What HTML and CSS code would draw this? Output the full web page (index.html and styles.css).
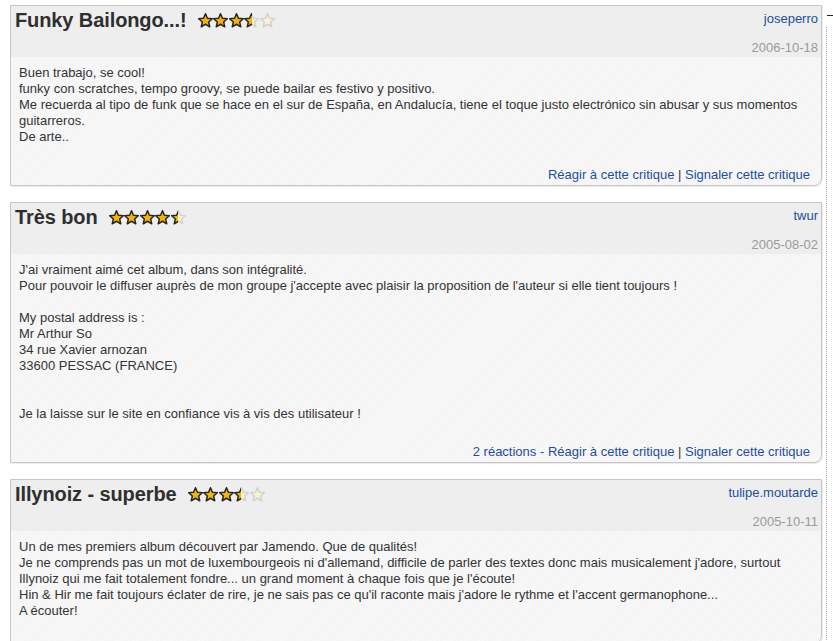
FILE: index.html
```html
<!DOCTYPE html>
<html lang="fr">
<head>
<meta charset="utf-8">
<title>Critiques</title>
<link rel="stylesheet" href="styles.css">
</head>
<body>
<div class="page">
  <div class="reviews">

    <div class="review">
      <div class="review-head">
        <div class="head-row">
          <h2 class="title">Funky Bailongo...!</h2>
          <span class="stars">
            <svg class="star" viewBox="0 0 20 20"><polygon class="full" points="10,1 12.59,7.04 19.13,7.63 14.18,11.96 15.64,18.37 10,15 4.36,18.37 5.82,11.96 0.87,7.63 7.41,7.04"/></svg>
            <svg class="star" viewBox="0 0 20 20"><polygon class="full" points="10,1 12.59,7.04 19.13,7.63 14.18,11.96 15.64,18.37 10,15 4.36,18.37 5.82,11.96 0.87,7.63 7.41,7.04"/></svg>
            <svg class="star" viewBox="0 0 20 20"><polygon class="full" points="10,1 12.59,7.04 19.13,7.63 14.18,11.96 15.64,18.37 10,15 4.36,18.37 5.82,11.96 0.87,7.63 7.41,7.04"/></svg>
            <svg class="star" viewBox="0 0 20 20"><defs><linearGradient id="hf1" x1="0" x2="1" y1="0" y2="0"><stop offset="0.5" stop-color="#f6b400"/><stop offset="0.5" stop-color="#fbf2cf"/></linearGradient><linearGradient id="hs1" x1="0" x2="1" y1="0" y2="0"><stop offset="0.5" stop-color="#262626"/><stop offset="0.5" stop-color="#d2d2d2"/></linearGradient></defs><polygon fill="url(#hf1)" stroke="url(#hs1)" stroke-width="2" stroke-linejoin="round" points="10,1 12.59,7.04 19.13,7.63 14.18,11.96 15.64,18.37 10,15 4.36,18.37 5.82,11.96 0.87,7.63 7.41,7.04"/></svg>
            <svg class="star" viewBox="0 0 20 20"><polygon class="empty" points="10,1 12.59,7.04 19.13,7.63 14.18,11.96 15.64,18.37 10,15 4.36,18.37 5.82,11.96 0.87,7.63 7.41,7.04"/></svg>
          </span>
          <a class="user" href="#">joseperro</a>
        </div>
        <div class="date">2006-10-18</div>
      </div>
      <div class="review-body">
        <p class="text">Buen trabajo, se cool!<br>funky con scratches, tempo groovy, se puede bailar es festivo y positivo.<br>Me recuerda al tipo de funk que se hace en el sur de España, en Andalucía, tiene el toque justo electrónico sin abusar y sus momentos guitarreros.<br>De arte..</p>
        <div class="actions"><a href="#">Réagir à cette critique</a> | <a href="#">Signaler cette critique</a></div>
      </div>
    </div>

    <div class="review">
      <div class="review-head">
        <div class="head-row">
          <h2 class="title">Très bon</h2>
          <span class="stars">
            <svg class="star" viewBox="0 0 20 20"><polygon class="full" points="10,1 12.59,7.04 19.13,7.63 14.18,11.96 15.64,18.37 10,15 4.36,18.37 5.82,11.96 0.87,7.63 7.41,7.04"/></svg>
            <svg class="star" viewBox="0 0 20 20"><polygon class="full" points="10,1 12.59,7.04 19.13,7.63 14.18,11.96 15.64,18.37 10,15 4.36,18.37 5.82,11.96 0.87,7.63 7.41,7.04"/></svg>
            <svg class="star" viewBox="0 0 20 20"><polygon class="full" points="10,1 12.59,7.04 19.13,7.63 14.18,11.96 15.64,18.37 10,15 4.36,18.37 5.82,11.96 0.87,7.63 7.41,7.04"/></svg>
            <svg class="star" viewBox="0 0 20 20"><polygon class="full" points="10,1 12.59,7.04 19.13,7.63 14.18,11.96 15.64,18.37 10,15 4.36,18.37 5.82,11.96 0.87,7.63 7.41,7.04"/></svg>
            <svg class="star" viewBox="0 0 20 20"><defs><linearGradient id="hf2" x1="0" x2="1" y1="0" y2="0"><stop offset="0.5" stop-color="#f6b400"/><stop offset="0.5" stop-color="#fbf2cf"/></linearGradient><linearGradient id="hs2" x1="0" x2="1" y1="0" y2="0"><stop offset="0.5" stop-color="#262626"/><stop offset="0.5" stop-color="#d2d2d2"/></linearGradient></defs><polygon fill="url(#hf2)" stroke="url(#hs2)" stroke-width="2" stroke-linejoin="round" points="10,1 12.59,7.04 19.13,7.63 14.18,11.96 15.64,18.37 10,15 4.36,18.37 5.82,11.96 0.87,7.63 7.41,7.04"/></svg>
          </span>
          <a class="user" href="#">twur</a>
        </div>
        <div class="date">2005-08-02</div>
      </div>
      <div class="review-body">
        <p class="text">J'ai vraiment aimé cet album, dans son intégralité.<br>Pour pouvoir le diffuser auprès de mon groupe j'accepte avec plaisir la proposition de l'auteur si elle tient toujours !<br><br>My postal address is :<br>Mr Arthur So<br>34 rue Xavier arnozan<br>33600 PESSAC (FRANCE)<br><br><br>Je la laisse sur le site en confiance vis à vis des utilisateur !</p>
        <div class="actions"><a href="#">2 réactions</a> <span class="link-dash">-</span> <a href="#">Réagir à cette critique</a> | <a href="#">Signaler cette critique</a></div>
      </div>
    </div>

    <div class="review">
      <div class="review-head">
        <div class="head-row">
          <h2 class="title">Illynoiz - superbe</h2>
          <span class="stars">
            <svg class="star" viewBox="0 0 20 20"><polygon class="full" points="10,1 12.59,7.04 19.13,7.63 14.18,11.96 15.64,18.37 10,15 4.36,18.37 5.82,11.96 0.87,7.63 7.41,7.04"/></svg>
            <svg class="star" viewBox="0 0 20 20"><polygon class="full" points="10,1 12.59,7.04 19.13,7.63 14.18,11.96 15.64,18.37 10,15 4.36,18.37 5.82,11.96 0.87,7.63 7.41,7.04"/></svg>
            <svg class="star" viewBox="0 0 20 20"><polygon class="full" points="10,1 12.59,7.04 19.13,7.63 14.18,11.96 15.64,18.37 10,15 4.36,18.37 5.82,11.96 0.87,7.63 7.41,7.04"/></svg>
            <svg class="star" viewBox="0 0 20 20"><defs><linearGradient id="hf3" x1="0" x2="1" y1="0" y2="0"><stop offset="0.5" stop-color="#f6b400"/><stop offset="0.5" stop-color="#fbf2cf"/></linearGradient><linearGradient id="hs3" x1="0" x2="1" y1="0" y2="0"><stop offset="0.5" stop-color="#262626"/><stop offset="0.5" stop-color="#d2d2d2"/></linearGradient></defs><polygon fill="url(#hf3)" stroke="url(#hs3)" stroke-width="2" stroke-linejoin="round" points="10,1 12.59,7.04 19.13,7.63 14.18,11.96 15.64,18.37 10,15 4.36,18.37 5.82,11.96 0.87,7.63 7.41,7.04"/></svg>
            <svg class="star" viewBox="0 0 20 20"><polygon class="empty" points="10,1 12.59,7.04 19.13,7.63 14.18,11.96 15.64,18.37 10,15 4.36,18.37 5.82,11.96 0.87,7.63 7.41,7.04"/></svg>
          </span>
          <a class="user" href="#">tulipe.moutarde</a>
        </div>
        <div class="date">2005-10-11</div>
      </div>
      <div class="review-body">
        <p class="text">Un de mes premiers album découvert par Jamendo. Que de qualités!<br>Je ne comprends pas un mot de luxembourgeois ni d'allemand, difficile de parler des textes donc mais musicalement j'adore, surtout Illynoiz qui me fait totalement fondre... un grand moment à chaque fois que je l'écoute!<br>Hin &amp; Hir me fait toujours éclater de rire, je ne sais pas ce qu'il raconte mais j'adore le rythme et l'accent germanophone...<br>A écouter!</p>
      </div>
    </div>

  </div>
  <div class="side"><span class="side-tick"></span></div>
</div>
</body>
</html>
```

FILE: styles.css
```css
html, body {
  margin: 0;
  padding: 0;
  background: #ffffff;
}

body {
  font-family: "Liberation Sans", Arial, sans-serif;
  font-size: 13px;
  color: #333333;
}

.page {
  display: flex;
  align-items: stretch;
  padding: 5px 0 0 10px;
  min-height: 636px;
}

.reviews {
  width: 812px;
  display: flex;
  flex-direction: column;
  gap: 16px;
}

.review {
  border: 1px solid #c6c6c6;
  border-bottom-right-radius: 8px;
  background: repeating-linear-gradient(135deg, #f8f8f8 0px, #f8f8f8 1px, #f4f4f4 1px, #f4f4f4 2px);
  box-shadow: 1px 1px 0 #ececec;
  overflow: hidden;
}

.review-head {
  background: #eeeeee;
  padding: 2px 3px 1px 4px;
}

.head-row {
  display: flex;
  align-items: center;
  height: 24px;
}

.title {
  margin: 0;
  font-size: 20px;
  line-height: 24px;
  font-weight: bold;
  color: #2f2f2f;
  letter-spacing: -0.1px;
}

.stars {
  display: flex;
  align-items: center;
  margin-left: 11px;
  gap: 0.5px;
}

.star {
  width: 15px;
  height: 15px;
  display: block;
}

.star .full {
  fill: #f6b400;
  stroke: #262626;
  stroke-width: 2;
  stroke-linejoin: round;
}

.star .empty {
  fill: #fbf2cf;
  stroke: #d2d2d2;
  stroke-width: 2;
  stroke-linejoin: round;
}

.user {
  margin-left: auto;
  color: #1d4e9e;
  text-decoration: none;
  line-height: 16px;
  margin-top: -2px;
}

.date {
  margin-top: 8px;
  text-align: right;
  color: #9a9a9a;
  line-height: 16px;
}

.review-body {
  padding: 8px 11px 2px 8px;
}

.text {
  margin: 0 0 22px 0;
  line-height: 16px;
  color: #333333;
}

.actions {
  text-align: right;
  line-height: 16px;
  color: #333333;
}

.actions a,
.link-dash {
  color: #1d4e9e;
  text-decoration: none;
}

.side {
  margin-left: 4px;
  margin-top: 22px;
  border-left: 1px dotted #a8a8a8;
  width: 6px;
}

.side-tick {
  display: block;
  width: 6px;
  height: 1px;
  background: #222;
  margin-top: -12px;
}
```
